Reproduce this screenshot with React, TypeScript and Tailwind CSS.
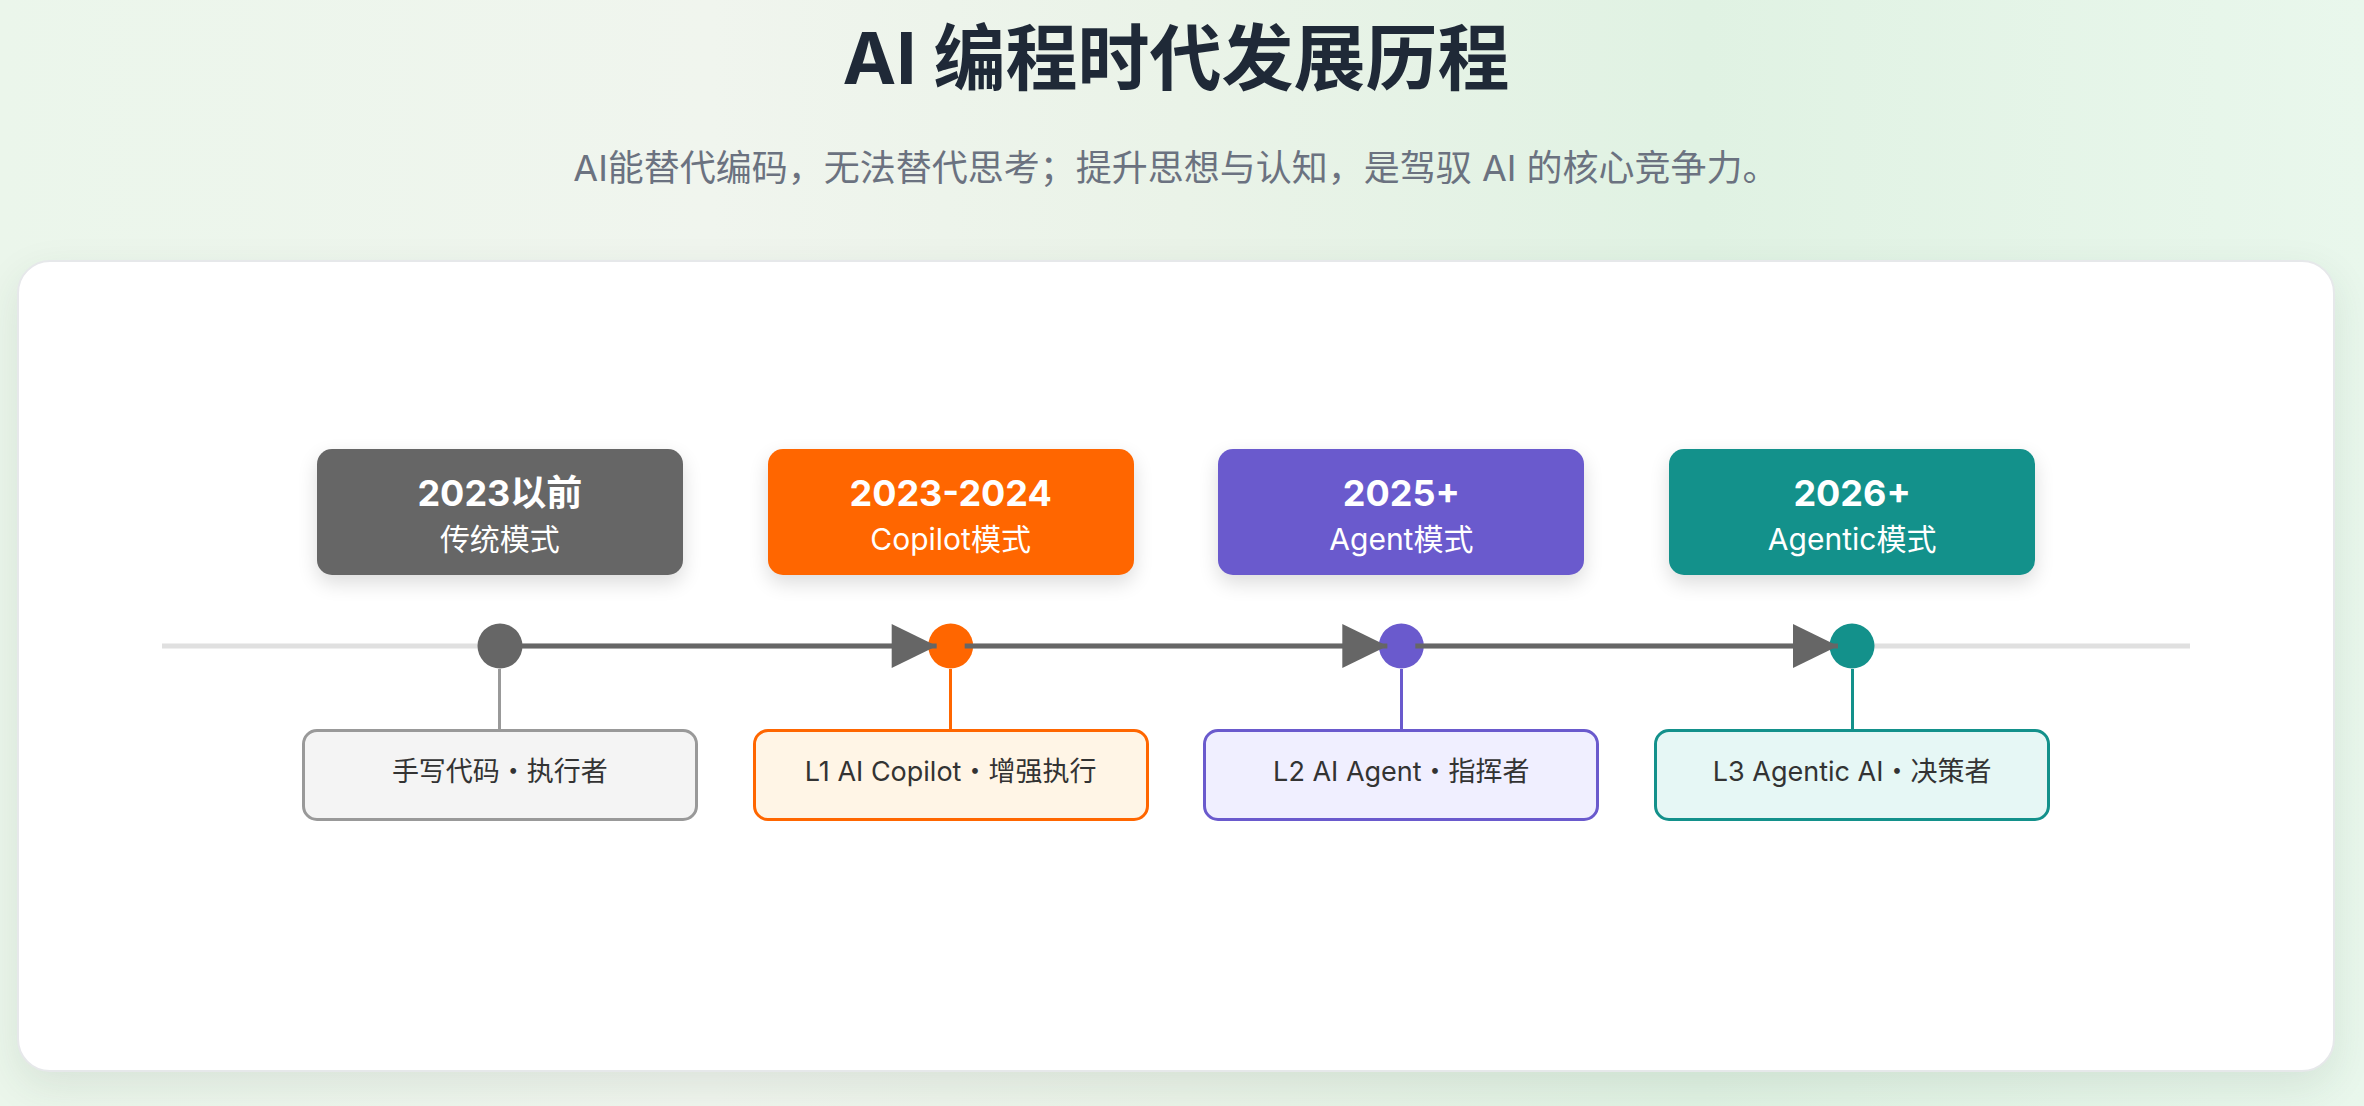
import React from "react";

type Stage = {
  year: string;
  mode: string;
  role: string;
  main: string;
  box: string;
  connector: string;
  bottom: string;
};

const stages: Stage[] = [
  {
    year: "2023以前",
    mode: "传统模式",
    role: "手写代码・执行者",
    main: "bg-[#666666]",
    box: "bg-[#666666]",
    connector: "bg-[#999999]",
    bottom: "bg-[#f4f4f4] border-[#999999]",
  },
  {
    year: "2023-2024",
    mode: "Copilot模式",
    role: "L1 AI Copilot・增强执行",
    main: "bg-[#ff6600]",
    box: "bg-[#ff6600]",
    connector: "bg-[#ff6600]",
    bottom: "bg-[#fff5e6] border-[#ff6600]",
  },
  {
    year: "2025+",
    mode: "Agent模式",
    role: "L2 AI Agent・指挥者",
    main: "bg-[#6a5acd]",
    box: "bg-[#6a5acd]",
    connector: "bg-[#6a5acd]",
    bottom: "bg-[#f0efff] border-[#6a5acd]",
  },
  {
    year: "2026+",
    mode: "Agentic模式",
    role: "L3 Agentic AI・决策者",
    main: "bg-[#13918b]",
    box: "bg-[#13918b]",
    connector: "bg-[#13918b]",
    bottom: "bg-[#e6f7f5] border-[#13918b]",
  },
];

const circleColors = ["#666666", "#ff6600", "#6a5acd", "#13918b"];
const cx = [338, 788.67, 1239.33, 1690];

function TimelineLine() {
  const y = 23;
  return (
    <svg width="2028" height="46" viewBox="0 0 2028 46" className="block mx-auto">
      <line x1="0" y1={y} x2="2028" y2={y} stroke="#e0e0e0" strokeWidth="5" />
      {cx.map((x, i) => (
        <circle key={i} cx={x} cy={y} r="22.5" fill={circleColors[i]} />
      ))}
      {cx.slice(0, 3).map((x, i) => {
        const nx = cx[i + 1];
        return (
          <g key={i}>
            <line x1={x + 14} y1={y} x2={nx - 30} y2={y} stroke="#666666" strokeWidth="5" />
            <line x1={nx - 40} y1={y} x2={nx - 14} y2={y} stroke="#666666" strokeWidth="5" />
            <polygon points={`${nx - 59},${y - 22} ${nx - 14},${y} ${nx - 59},${y + 22}`} fill="#666666" />
          </g>
        );
      })}
    </svg>
  );
}

export default function App() {
  return (
    <div className="w-[2364px] h-[1106px] overflow-hidden bg-[linear-gradient(90deg,#ebf6eb_0%,#f0f5ee_30%,#eaf3e8_50%,#e0f2e3_72%,#e9f7ec_100%)] font-['Inter','Noto_Sans_CJK_SC',sans-serif]">
      <div className="w-[2352px] px-[17px] pt-[22px] flex flex-col items-center">
        <h1 className="text-[72px] leading-[72px] font-bold text-[#1f2937] text-center">
          AI 编程时代发展历程
        </h1>
        <p className="mt-[56px] text-[36px] leading-[36px] text-[#6b7280] text-center">
          AI能替代编码，无法替代思考；提升思想与认知，是驾驭 AI 的核心竞争力。
        </p>
        <div className="mt-[74px] w-full h-[812px] rounded-[33px] bg-white border-2 border-[#e6e8ea] shadow-[0_14px_40px_rgba(40,70,50,0.10)] pt-[187px]">
          <div className="w-[1803px] mx-auto grid grid-cols-4">
            {stages.map((s, i) => (
              <div key={i} className="flex justify-center">
                <div
                  className={`w-[366px] h-[126px] rounded-[15px] ${s.box} text-white text-center pt-[26px] shadow-[0_8px_20px_rgba(0,0,0,0.14)]`}
                >
                  <div className="text-[36px] leading-[36px] font-bold">{s.year}</div>
                  <div className="mt-[13px] text-[30px] leading-[30px]">{s.mode}</div>
                </div>
              </div>
            ))}
          </div>
          <div className="mt-[48px]">
            <TimelineLine />
          </div>
          <div className="w-[1803px] mx-auto grid grid-cols-4">
            {stages.map((s, i) => (
              <div key={i} className="flex flex-col items-center">
                <div className={`w-[3px] h-[60px] ${s.connector}`} />
                <div
                  className={`w-[396px] h-[92px] rounded-[15px] border-[3px] ${s.bottom} flex items-center justify-center pb-[6px] text-[27px] text-[#333333]`}
                >
                  {s.role}
                </div>
              </div>
            ))}
          </div>
        </div>
      </div>
    </div>
  );
}
